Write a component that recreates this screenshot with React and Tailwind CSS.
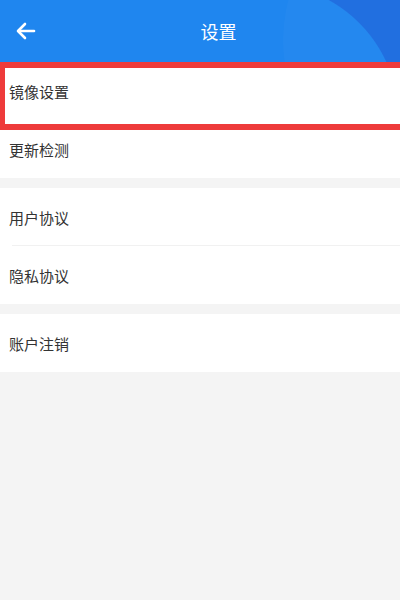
import React from "react";

const font = { fontFamily: '"Noto Sans CJK SC", "Noto Sans", sans-serif' };

function Row({ label, divider }) {
  return (
    <div className="relative flex h-[58px] items-center bg-white pl-[9px]">
      <span className="text-[15px] leading-none text-[#333333]">{label}</span>
      {divider && <div className="absolute bottom-0 left-[12px] right-0 h-px bg-[#f1f1f1]" />}
    </div>
  );
}

export default function App() {
  return (
    <div className="relative flex min-h-[600px] w-[400px] flex-col overflow-hidden bg-[#f4f4f4]" style={font}>
      <div className="relative flex h-[62px] items-center overflow-hidden bg-[#1f86ef]">
        <div className="pointer-events-none absolute right-0 top-0 h-full w-[140px] bg-[radial-gradient(circle_at_4px_118px,transparent_134px,#1c6ce0_135px)]" />
        <div className="pointer-events-none absolute left-[283px] top-[-110px] h-[300px] w-[300px] rounded-full bg-white/[0.025]" />
        <div className="relative ml-[15px] flex h-[22px] w-[22px] items-center justify-center">
          <svg width="20" height="18" viewBox="0 0 20 18" fill="none" stroke="white" strokeWidth="2.6" strokeLinecap="round" strokeLinejoin="round">
            <path d="M18 9H3" />
            <path d="M9 2L2 9l7 7" />
          </svg>
        </div>
        <div className="relative flex-1 text-center text-[18px] text-white">设置</div>
      </div>

      <div className="relative flex flex-col">
        <Row label="镜像设置" />
        <Row label="更新检测" />
        <div className="pointer-events-none absolute left-0 top-0 h-[68px] w-[410px] border-y-[6px] border-l-[5px] border-[#ee3b3b]" />
      </div>
      <div className="mt-[10px] flex flex-col">
        <Row label="用户协议" divider />
        <Row label="隐私协议" />
      </div>
      <div className="mt-[10px] flex flex-col">
        <Row label="账户注销" />
      </div>
    </div>
  );
}
